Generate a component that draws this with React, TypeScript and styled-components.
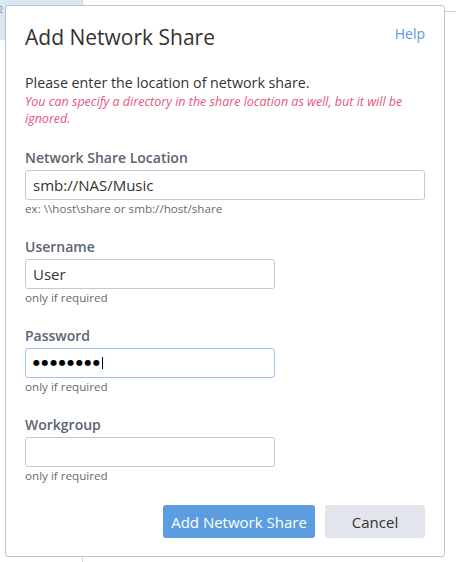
import styled, { createGlobalStyle } from "styled-components"

const GlobalStyle = createGlobalStyle`
  html, body {
    margin: 0;
    padding: 0;
    background: #ffffff;
  }
  body {
    width: 456px;
    height: 562px;
    overflow: hidden;
    font-family: "Open Sans", "Noto Sans", "DejaVu Sans", sans-serif;
    color: #333333;
  }
`

interface Field {
  label: string
  value: string
  hint: string
  wide?: boolean
}

const fields: Field[] = [
  {
    label: "Network Share Location",
    value: "smb://NAS/Music",
    hint: "ex: \\\\host\\share or smb://host/share",
    wide: true,
  },
  { label: "Username", value: "User", hint: "only if required" },
]

export default function App() {
  return (
    <>
      <GlobalStyle />
      <Page>
        <Sidebar>
          <SidebarTop>2</SidebarTop>
        </Sidebar>
        <Main>
          <TopRule />
        </Main>

        <Dialog>
          <Header>
            <Title>Add Network Share</Title>
            <HelpLink href="#">Help</HelpLink>
          </Header>

          <Intro>Please enter the location of network share.</Intro>
          <Warning>
            You can specify a directory in the share location as well, but it
            will be ignored.
          </Warning>

          <Form>
            {fields.map((f) => (
              <Group key={f.label}>
                <Label>{f.label}</Label>
                <TextInput $wide={f.wide} defaultValue={f.value} readOnly />
                <Hint>{f.hint}</Hint>
              </Group>
            ))}

            <Group>
              <Label>Password</Label>
              <FocusedField>
                <Dots>●●●●●●●●</Dots>
                <Caret />
              </FocusedField>
              <Hint>only if required</Hint>
            </Group>

            <Group>
              <Label>Workgroup</Label>
              <TextInput defaultValue="" readOnly />
              <Hint>only if required</Hint>
            </Group>
          </Form>

          <Actions>
            <Button $primary>Add Network Share</Button>
            <Button>Cancel</Button>
          </Actions>
        </Dialog>
      </Page>
    </>
  )
}

const Page = styled.div`
  position: relative;
  display: flex;
  width: 456px;
  height: 562px;
`

const Sidebar = styled.div`
  width: 82px;
  flex-shrink: 0;
  border-right: 1px solid #d4d8dc;
`

const SidebarTop = styled.div`
  height: 40px;
  background: #dbe6f3;
  color: #8a9098;
  font-size: 9px;
  line-height: 20px;
  margin-left: -2px;
`

const Main = styled.div`
  flex: 1;
  padding-top: 11px;
`

const TopRule = styled.div`
  border-top: 1px solid #d0d4d8;
`

const Dialog = styled.div`
  position: absolute;
  left: 5px;
  top: 5px;
  width: 440px;
  height: 552px;
  box-sizing: border-box;
  background: #ffffff;
  border: 1px solid #b6c6d6;
  border-radius: 3px;
  padding: 16px 19px 18px 19px;
  display: flex;
  flex-direction: column;
`

const Header = styled.div`
  display: flex;
  justify-content: space-between;
  align-items: flex-start;
`

const Title = styled.h1`
  margin: 0;
  font-size: 21px;
  line-height: 30px;
  font-weight: 400;
  color: #333333;
`

const HelpLink = styled.a`
  margin-top: 2px;
  font-size: 14px;
  line-height: 20px;
  color: #5b9be0;
  text-decoration: none;
`

const Intro = styled.p`
  margin: 21px 0 0;
  font-size: 14.25px;
  line-height: 20px;
  color: #333333;
`

const Warning = styled.p`
  margin: 0;
  font-size: 12.5px;
  line-height: 17px;
  font-style: italic;
  color: #e5577a;
`

const Form = styled.div`
  margin-top: 21px;
  display: flex;
  flex-direction: column;
  gap: 20px;
`

const Group = styled.div`
  display: flex;
  flex-direction: column;
  align-items: flex-start;
`

const Label = styled.label`
  font-size: 14px;
  line-height: 20px;
  font-weight: 600;
  color: #5b6472;
  margin-bottom: 2px;
`

const fieldBox = `
  box-sizing: border-box;
  height: 30px;
  border-radius: 3px;
  background: #ffffff;
  padding: 0 7px;
  font-family: "Open Sans", "Noto Sans", sans-serif;
  font-size: 15px;
  color: #333333;
`

const TextInput = styled.input<{ $wide?: boolean }>`
  ${fieldBox}
  width: ${({ $wide }) => ($wide ? "400px" : "250px")};
  border: 1px solid #c6cad0;
  outline: none;
`

const FocusedField = styled.div`
  ${fieldBox}
  width: 250px;
  border: 1px solid #9dc1ea;
  display: flex;
  align-items: center;
`

const Dots = styled.span`
  font-family: "DejaVu Sans", sans-serif;
  font-size: 8px;
  letter-spacing: 1.6px;
  color: #000000;
  line-height: 1;
`

const Caret = styled.span`
  width: 1px;
  height: 12px;
  background: #000000;
`

const Hint = styled.div`
  font-size: 11.65px;
  line-height: 17px;
  color: #666a70;
`

const Actions = styled.div`
  margin-top: auto;
  display: flex;
  justify-content: flex-end;
  gap: 10px;
`

const Button = styled.button<{ $primary?: boolean }>`
  height: 33px;
  padding: 0;
  width: ${({ $primary }) => ($primary ? "152px" : "100px")};
  border: none;
  border-radius: 3px;
  font-family: "Open Sans", "Noto Sans", sans-serif;
  font-size: 15px;
  background: ${({ $primary }) => ($primary ? "#5b9de0" : "#e2e5eb")};
  color: ${({ $primary }) => ($primary ? "#ffffff" : "#333333")};
`
